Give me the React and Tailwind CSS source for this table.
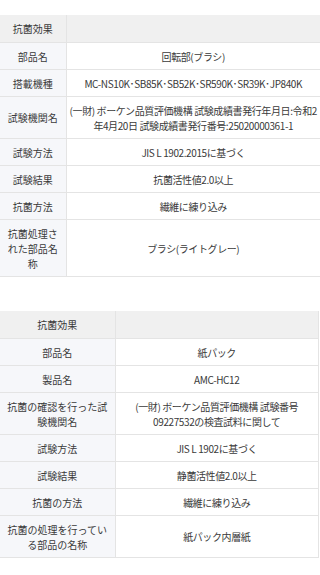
import React from "react";

const tableOne = [
  ["部品名", "回転部(ブラシ)"],
  ["搭載機種", "MC-NS10K･SB85K･SB52K･SR590K･SR39K･JP840K"],
  ["試験機関名", "(一財) ボーケン品質評価機構 試験成績書発行年月日:令和2年4月20日 試験成績書発行番号:25020000361-1"],
  ["試験方法", "JIS L 1902.2015に基づく"],
  ["試験結果", "抗菌活性値2.0以上"],
  ["抗菌方法", "繊維に練り込み"],
  ["抗菌処理された部品名称", "ブラシ(ライトグレー)"],
];

const tableTwo = [
  ["部品名", "紙パック"],
  ["製品名", "AMC-HC12"],
  ["抗菌の確認を行った試験機関名", "(一財) ボーケン品質評価機構 試験番号09227532の検査試料に関して"],
  ["試験方法", "JIS L 1902に基づく"],
  ["試験結果", "静菌活性値2.0以上"],
  ["抗菌の方法", "繊維に練り込み"],
  ["抗菌の処理を行っている部品の名称", "紙パック内層紙"],
];

const SpecTable = ({ rows, labelWidth, width }) => (
  <table className={`border-collapse table-fixed ${width}`}>
    <colgroup>
      <col className={labelWidth} />
      <col />
    </colgroup>
    <tbody>
      <tr className="bg-[#f0f0f0]">
        <th className="border-b border-r border-[#e4e4e4] py-[6px] px-[4px] font-normal text-center">
          抗菌効果
        </th>
        <th className="border-b border-r border-[#e4e4e4]"></th>
      </tr>
      {rows.map(([label, value]) => (
        <tr key={label}>
          <th className="bg-[#f6f7fa] border-b border-r border-[#e4e4e4] py-[5.5px] px-[6px] font-normal text-center">
            {label}
          </th>
          <td className="bg-white border-b border-r border-[#e4e4e4] py-[5.5px] px-[2px] text-center tracking-[-0.4px]">
            {value}
          </td>
        </tr>
      ))}
    </tbody>
  </table>
);

export default function App() {
  return (
    <div
      className="w-[320px] min-h-[575px] bg-white text-[#3a3a3a] text-[10px] leading-[15px] pt-[15px]"
      style={{ fontFamily: '"Noto Sans CJK JP", "Noto Sans", sans-serif' }}
    >
      <SpecTable rows={tableOne} labelWidth="w-[66px]" width="w-[321px]" />
      <div className="h-[34px]"></div>
      <SpecTable rows={tableTwo} labelWidth="w-[115px]" width="w-[319px]" />
    </div>
  );
}
